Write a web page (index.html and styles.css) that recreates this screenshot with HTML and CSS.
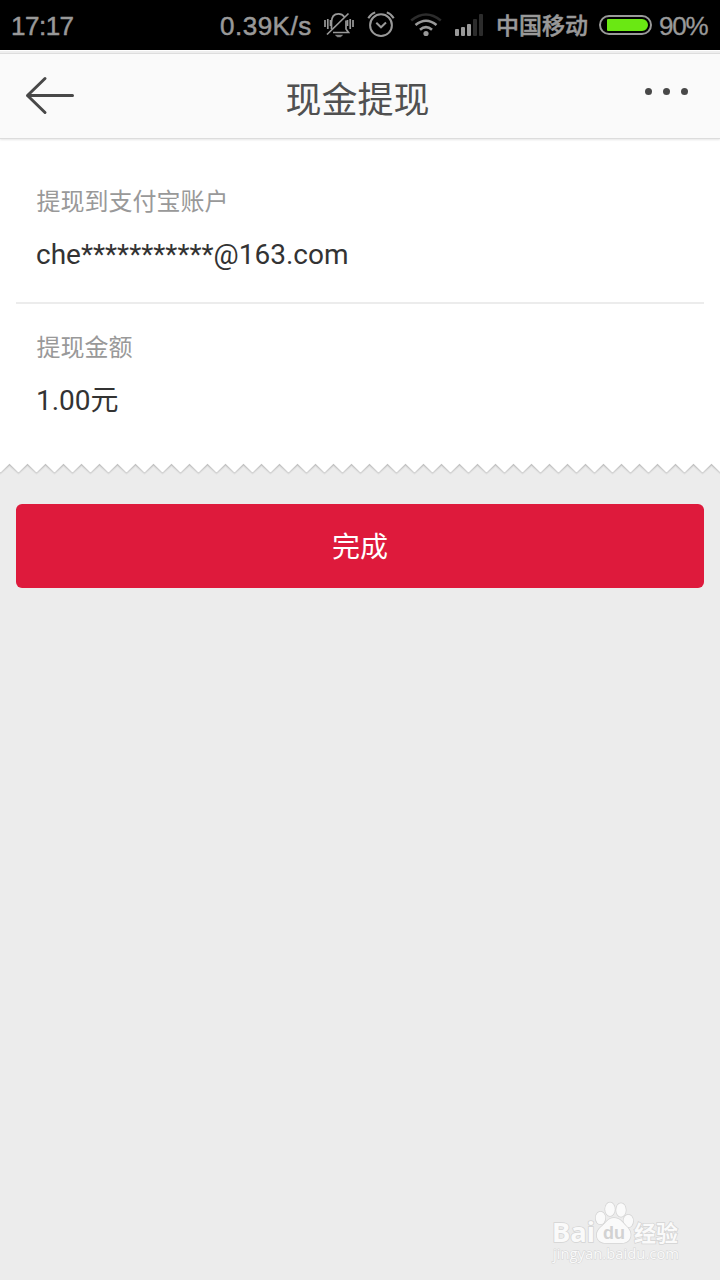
FILE: index.html
```html
<!DOCTYPE html>
<html lang="zh-CN">
<head>
<meta charset="utf-8">
<title>现金提现</title>
<link rel="stylesheet" href="styles.css">
</head>
<body>
<div class="status">
  <span class="clock">17:17</span>
  <span class="speed">0.39K/s</span>
  <svg class="ic-bell" width="30" height="28" viewBox="0 0 30 28" fill="none" stroke="#999" stroke-width="1.7">
    <path d="M1 9v7M3.8 8v10M6.5 9v6M23.500 9v6M26.2 8v10M29 9v7"/>
    <path d="M7.500 18V11.500C7.500 6 10 2.900 14.500 2.900c2.500 0 4.500 1 6 3M22 9.500v8.500l2.500 3.500H9"/>
    <path d="M3 23.500L24.500 2.500"/>
    <path d="M11.500 24.200h7l-2 1.600h-3z" fill="#999" stroke-width=".6"/>
  </svg>
  <svg class="ic-alarm" width="28" height="28" viewBox="0 0 28 28" fill="none" stroke="#999" stroke-width="2">
    <circle cx="14" cy="15.200" r="10.900"/>
    <path d="M9.300 12.800l4.700 4.500 5-4.800"/>
    <path d="M1.300 8.200Q3.500 4 8.200 2.400M26.700 8.200Q24.500 4 19.800 2.400"/>
  </svg>
  <svg class="ic-wifi" width="32" height="26" viewBox="0 0 32 26" fill="none" stroke="#999" stroke-width="2.600">
    <path d="M1.200 8.500Q16-3.500 30.800 8.500" stroke="#2c2c2c"/>
    <path d="M5.500 13Q16 4.500 26.500 13M10 17.800Q16 12.500 22 17.800"/>
    <circle cx="16" cy="21.500" r="2.600" fill="#999" stroke="none"/>
  </svg>
  <svg class="ic-signal" width="28" height="23" viewBox="0 0 28 23" fill="#999">
    <rect x="0" y="15" width="4" height="7" rx="1"/>
    <rect x="6" y="13" width="4" height="9" rx="1"/>
    <rect x="12" y="10" width="4" height="12" rx="1"/>
    <rect x="18" y="5" width="4" height="17" rx="1" fill="#2c2c2c"/>
    <rect x="24" y="0" width="4" height="22" rx="1" fill="#2c2c2c"/>
  </svg>
  <span class="carrier">中国移动</span>
  <span class="battery"><i class="charge"></i></span>
  <span class="percent">90%</span>
</div>
<header class="header">
  <svg class="back" width="50" height="40" viewBox="0 0 50 40" fill="none" stroke="#484848" stroke-width="3" stroke-linecap="round" stroke-linejoin="round">
    <path d="M47.500 20.500H2.500M20 3.500L2.500 20.500L20 37.500"/>
  </svg>
  <h1 class="title">现金提现</h1>
  <div class="more"><i class="dot"></i><i class="dot"></i><i class="dot"></i></div>
</header>
<main class="sheet">
  <section class="field">
    <div class="label">提现到支付宝账户</div>
    <div class="value">che***********@163.com</div>
  </section>
  <section class="field amount">
    <div class="label">提现金额</div>
    <div class="value">1.00元</div>
  </section>
</main>
<svg class="tear" width="720" height="14" viewBox="0 0 720 14">
  <defs>
    <linearGradient id="shade" x1="0" y1="0" x2="0" y2="1">
      <stop offset="0" stop-color="#bcbcbc"/>
      <stop offset="1" stop-color="#d6d6d6"/>
    </linearGradient>
    <pattern id="teeth" width="18" height="14" patternUnits="userSpaceOnUse">
      <path d="M0 0H18V11.500L9.500 4L1 11.500H0z" fill="#e2e2e2"/>
      <path d="M0 0H18V10.500L9.500 2.400L1 10.500H0z" fill="url(#shade)"/>
      <path d="M0 0H18V9L9.500 .7L1 9H0z" fill="#fff"/>
    </pattern>
  </defs>
  <rect width="720" height="14" fill="url(#teeth)"/>
</svg>
<button class="done">完成</button>
<svg class="watermark" width="150" height="72" viewBox="0 0 150 72">
  <g fill="#fafafa" stroke="#d4d4d4" stroke-width="1.500" paint-order="stroke">
    <text class="wm-bai" x="2" y="42" textLength="43" lengthAdjust="spacingAndGlyphs">Bai</text>
    <ellipse cx="50.500" cy="18" rx="4.800" ry="6.300"/>
    <ellipse cx="60" cy="9.300" rx="4.800" ry="6.800"/>
    <ellipse cx="71" cy="10" rx="4.800" ry="6.800"/>
    <ellipse cx="78.300" cy="21" rx="4.800" ry="6.300"/>
    <path d="M64 18c6 0 8 4 12 8 8 7 5 17-4 17H56c-10 0-12-10-5-16 5-4 7-9 13-9z"/>
    <text class="wm-cn" x="84" y="41" textLength="44">经验</text>
    <text class="wm-url" x="3" y="59" textLength="126" lengthAdjust="spacingAndGlyphs">jingyan.baidu.com</text>
  </g>
  <text class="wm-du" x="53" y="39" textLength="22" lengthAdjust="spacingAndGlyphs">du</text>
</svg>
</body>
</html>
```
FILE: styles.css
```css
* { box-sizing: border-box; }
body {
  margin: 0;
  width: 720px;
  height: 1280px;
  position: relative;
  overflow: hidden;
  background: #ececec;
  font-family: Roboto, "Noto Sans CJK SC", sans-serif;
}
svg { display: block; flex: none; }
.status {
  display: flex;
  align-items: flex-start;
  height: 50px;
  padding-left: 11px;
  background: #000;
  color: #999;
  font: 26px/50px "Liberation Sans", "Noto Sans CJK SC", sans-serif;
  white-space: nowrap;
}
.clock { width: 208px; padding-top: 1px; letter-spacing: -.5px; -webkit-text-stroke: .5px #999; }
.speed { width: 105px; padding: 1px 0 0 1px; letter-spacing: .5px; -webkit-text-stroke: .5px #999; }
.ic-bell { margin-top: 11px; }
.ic-alarm { margin: 10px 0 0 13px; }
.ic-wifi { margin: 12px 0 0 15px; }
.ic-signal { margin: 14px 0 0 13px; }
.carrier {
  width: 116px;
  padding-left: 13px;
  font: 500 23px/49px "Noto Sans CJK SC", sans-serif;
  -webkit-text-stroke: .5px #999;
}
.battery {
  width: 53px;
  height: 20px;
  margin-top: 15px;
  padding: 2px;
  border: 2px solid #999;
  border-radius: 10px;
}
.charge {
  display: block;
  width: 41px;
  height: 12px;
  margin-left: 4px;
  border-radius: 1px 6px 6px 1px;
  background: #6ae813;
}
.percent { padding: 1px 0 0 7px; letter-spacing: -1.2px; -webkit-text-stroke: .3px #999; }
.header {
  position: relative;
  display: flex;
  justify-content: space-between;
  height: 89px;
  padding: 0 32px 0 25px;
  border-bottom: 1px solid #dcdcdc;
  background: linear-gradient(#fff 0 1px, #eee 1px 3px, #ddd 3px 4px, #fafafa 4px);
  box-shadow: 0 1px 2px #0000001a;
}
.back { margin-top: 25px; }
.title {
  margin: 0 5px 0 0;
  color: #505050;
  font: 36px/94px "Noto Sans CJK SC", sans-serif;
}
.more { display: flex; gap: 11px; padding-top: 38px; }
.dot { width: 7px; height: 7px; border-radius: 50%; background: #484848; }
.sheet { height: 324px; padding: 41px 16px 0; background: #fff; }
.field { height: 124px; padding-left: 20px; border-bottom: 2px solid #ececec; }
.amount { padding-top: 22px; border: 0; }
.label { padding-left: .5px; color: #999; font: 24px/40px "Noto Sans CJK SC", sans-serif; }
.value { padding-top: 14px; color: #333; font-size: 28px; line-height: 42px; }
.done {
  display: block;
  width: 688px;
  height: 84px;
  margin: 27px auto 0;
  padding: 0 0 2px;
  border: 0;
  border-radius: 6px;
  background: #de1a3c;
  color: #fff;
  font: 28px/82px "Noto Sans CJK SC", sans-serif;
}
.watermark { position: absolute; left: 550px; top: 1200px; }
.wm-bai { font: bold 26px "Noto Sans", sans-serif; }
.wm-cn { font: bold 22px "Noto Sans CJK SC", sans-serif; }
.wm-url { font: 14px "Open Sans", sans-serif; stroke-width: 1px; }
.wm-du { font: bold 19px "Liberation Sans", sans-serif; fill: #d2d2d2; }
```
